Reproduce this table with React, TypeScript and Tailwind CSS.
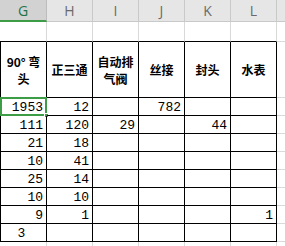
import React from "react";

const cols = ["G", "H", "I", "J", "K", "L"];
const widths = ["w-[47px]", "w-[46px]", "w-[46px]", "w-[46px]", "w-[46px]", "w-[46px]"];

const data: (string | null)[][] = [
  ["1953", "12", null, "782", null, null],
  ["111", "120", "29", null, "44", null],
  ["21", "18", null, null, null, null],
  ["10", "41", null, null, null, null],
  ["25", "14", null, null, null, null],
  ["10", "10", null, null, null, null],
  ["9", "1", null, null, null, "1"],
  ["3", null, null, null, null, null],
];

const headers: React.ReactNode[] = [
  <span className="flex flex-col items-center leading-[17px]"><span>90° 弯</span><span>头</span></span>,
  <span>正三通</span>,
  <span className="flex flex-col items-center leading-[17px]"><span>自动排</span><span>气阀</span></span>,
  <span>丝接</span>,
  <span>封头</span>,
  <span>水表</span>,
];

export default function App() {
  return (
    <div className="relative w-[285px] h-[246px] overflow-hidden bg-white">
      {/* column header row */}
      <div className="flex h-[22px]">
        {cols.map((c, i) => (
          <div
            key={c}
            className={
              i === 0
                ? "w-[47px] shrink-0 flex items-center justify-center bg-[#d2d2d2] border-b-2 border-[#3d9c46] border-r border-r-[#bdbdbd] text-[#217346] text-[14px] font-['Open_Sans',sans-serif]"
                : `${widths[i]} shrink-0 flex items-center justify-center bg-[#e6e6e6] border-b border-[#c9c9c9] border-r border-r-[#c9c9c9] text-[#6a6a6a] text-[14px] font-['Open_Sans',sans-serif]`
            }
          >
            {c}
          </div>
        ))}
        <div className="flex-1 bg-[#e6e6e6] border-b border-[#c9c9c9]" />
      </div>

      {/* empty row */}
      <div className="flex h-[20px]">
        {cols.map((c, i) => (
          <div key={c} className={`${widths[i]} shrink-0 border-b border-black border-r border-r-[#d9d9d9]`} />
        ))}
        <div className="flex-1 border-b border-[#d9d9d9]" />
      </div>

      {/* header row */}
      <div className="flex h-[56px]">
        {headers.map((h, i) => (
          <div
            key={i}
            className={`${widths[i]} shrink-0 flex items-center justify-center border-b border-r border-black ${i === 0 ? "border-l" : ""} font-bold text-[12px] leading-[17px] text-black font-['Noto_Sans_CJK_SC',sans-serif]`}
          >
            {h}
          </div>
        ))}
        <div className="flex-1 border-b border-[#d9d9d9]" />
      </div>

      {/* data rows */}
      {data.map((row, r) => (
        <div key={r} className="flex h-[18px]">
          {row.map((v, i) => (
            <div
              key={i}
              className={`${widths[i]} shrink-0 relative flex items-end ${r === 7 && i === 0 ? "justify-center pr-[4px]" : "justify-end pr-[3px]"} border-b border-r border-black ${i === 0 ? "border-l" : ""} text-[13px] leading-[15px] text-black font-['Liberation_Mono',monospace]`}
            >
              {v}
              {r === 0 && i === 0 && (
                <>
                  <div className="absolute -top-[1px] -left-[1px] -right-[1px] -bottom-[1px] border-2 border-[#3d9c46]" />
                  <div className="absolute -right-[3px] -bottom-[3px] w-[5px] h-[5px] bg-[#3d9c46] border border-white" />
                </>
              )}
            </div>
          ))}
          <div className="flex-1 border-b border-[#d9d9d9]" />
        </div>
      ))}

      {/* partial row */}
      <div className="flex h-[18px]">
        {cols.map((c, i) => (
          <div key={c} className={`${widths[i]} shrink-0 border-r border-[#d9d9d9]`} />
        ))}
        <div className="flex-1" />
      </div>
    </div>
  );
}
